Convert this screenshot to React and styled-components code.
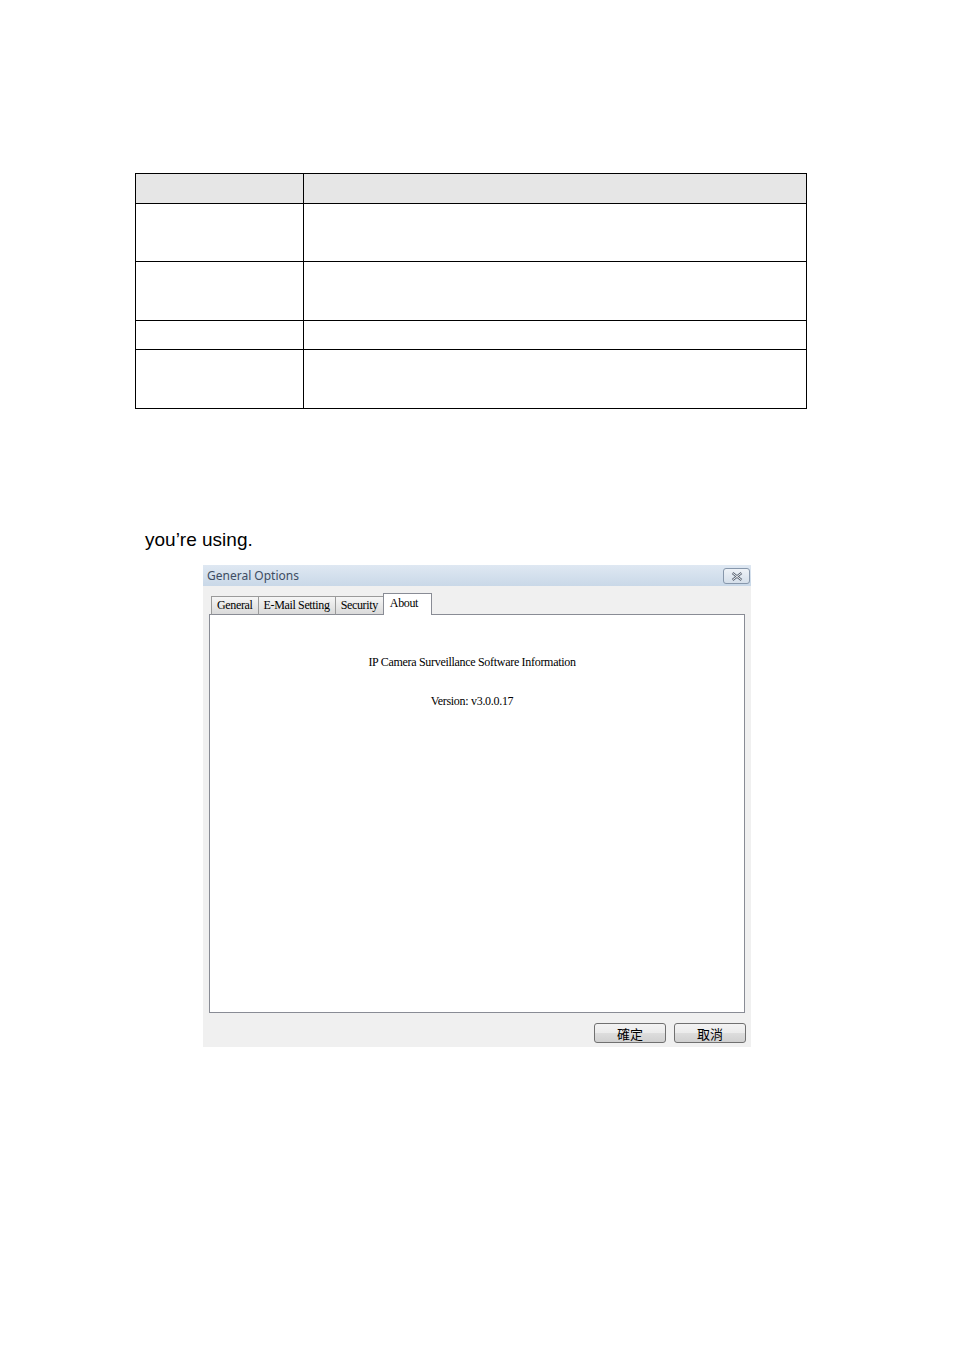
import React from "react";
import styled, { createGlobalStyle } from "styled-components";

const GlobalStyle = createGlobalStyle`
  html, body {
    margin: 0;
    padding: 0;
    background: #ffffff;
  }
  body {
    font-family: "Liberation Sans", Arial, sans-serif;
  }
`;

const Page = styled.div`
  width: 954px;
  height: 1350px;
  box-sizing: border-box;
  padding: 173px 0 0 135px;
`;

const Table = styled.table`
  width: 672px;
  border-collapse: collapse;
  table-layout: fixed;
`;

const Cell = styled.td`
  border: 1.3px solid #000000;
  height: ${(p) => p.h}px;
  padding: 0;
  background: ${(p) => (p.head ? "#e6e6e6" : "#ffffff")};
  box-sizing: border-box;
`;

const Lead = styled.p`
  margin: 120px 0 0 10px;
  font-size: 19px;
  line-height: 22px;
  color: #000000;
`;

const Dialog = styled.div`
  margin: 14px 0 0 68px;
  width: 548px;
  height: 482px;
  background: #f0f0f0;
  display: flex;
  flex-direction: column;
`;

const TitleBar = styled.div`
  height: 21px;
  display: flex;
  align-items: center;
  justify-content: space-between;
  padding: 0 1px 0 4px;
  background: linear-gradient(to bottom, #dfe8f2, #c9d8e8);
`;

const Title = styled.span`
  font-family: "Noto Sans", "Open Sans", sans-serif;
  font-size: 12px;
  color: #3e4d63;
`;

const CloseButton = styled.div`
  width: 25px;
  height: 14px;
  margin-top: 1px;
  border: 1px solid #8797ab;
  border-radius: 3px;
  background: linear-gradient(to bottom, #eef2f7, #d5dfea);
  display: flex;
  align-items: center;
  justify-content: center;
`;

const Body = styled.div`
  flex: 1;
  display: flex;
  flex-direction: column;
  padding: 7px 6px 4px 6px;
`;

const TabRow = styled.div`
  display: flex;
  align-items: flex-end;
  padding-left: 2px;
  height: 22px;
  position: relative;
  z-index: 1;
  margin-bottom: -1px;
`;

const Tab = styled.div`
  height: ${(p) => (p.active ? 22 : 19)}px;
  box-sizing: border-box;
  padding: ${(p) => (p.active ? "2px 13px 0 6px" : "1px 5px 0 5px")};
  margin-left: ${(p) => (p.first ? 0 : -1)}px;
  border: 1px solid ${(p) => (p.active ? "#898c95" : "#9a9a9a")};
  border-bottom: ${(p) => (p.active ? "none" : "1px solid #898c95")};
  background: ${(p) =>
    p.active ? "#ffffff" : "linear-gradient(to bottom, #f6f6f6, #dadada)"};
  font-family: "Liberation Serif", "Times New Roman", serif;
  font-size: 12px;
  letter-spacing: -0.35px;
  color: #000000;
  white-space: nowrap;
`;

const Panel = styled.div`
  height: 399px;
  box-sizing: border-box;
  border: 1px solid #898c95;
  background: #ffffff;
  display: flex;
  flex-direction: column;
  align-items: center;
  padding: 40px 0 0 0;
  font-family: "Liberation Serif", "Times New Roman", serif;
  font-size: 12px;
  letter-spacing: -0.3px;
  color: #000000;
`;

const InfoLine = styled.div`
  line-height: 14px;
  margin-bottom: ${(p) => p.gap || 0}px;
  margin-left: -10px;
`;

const ButtonRow = styled.div`
  display: flex;
  justify-content: flex-end;
  gap: 8px;
  margin-top: 10px;
  margin-right: -1px;
`;

const Button = styled.div`
  width: 72px;
  height: 20px;
  box-sizing: border-box;
  border: 1px solid #707070;
  border-radius: 3px;
  background: linear-gradient(to bottom, #f3f3f3 0%, #ebebeb 50%, #dddddd 51%, #d0d0d0 100%);
  display: flex;
  align-items: center;
  justify-content: center;
  font-family: "Noto Sans CJK TC", "Noto Sans CJK SC", sans-serif;
  font-size: 13px;
  color: #000000;
`;

const rows = [30, 58, 59, 29, 59];

export default function App() {
  return (
    <>
      <GlobalStyle />
      <Page>
        <Table>
          <colgroup>
            <col style={{ width: 168 }} />
            <col />
          </colgroup>
          <tbody>
            {rows.map((h, i) => (
              <tr key={i}>
                <Cell h={h} head={i === 0} />
                <Cell h={h} head={i === 0} />
              </tr>
            ))}
          </tbody>
        </Table>
        <Lead>you’re using.</Lead>
        <Dialog>
          <TitleBar>
            <Title>General Options</Title>
            <CloseButton>
              <svg width="12" height="9" viewBox="0 0 12 9">
                <path
                  d="M1.5 1 L10.5 8 M10.5 1 L1.5 8"
                  stroke="#5a6474"
                  strokeWidth="2.4"
                  fill="none"
                />
                <path
                  d="M1.5 1 L10.5 8 M10.5 1 L1.5 8"
                  stroke="#ffffff"
                  strokeWidth="0.9"
                  fill="none"
                />
              </svg>
            </CloseButton>
          </TitleBar>
          <Body>
            <TabRow>
              <Tab first>General</Tab>
              <Tab>E-Mail Setting</Tab>
              <Tab>Security</Tab>
              <Tab active>About</Tab>
            </TabRow>
            <Panel>
              <InfoLine gap={25}>IP Camera Surveillance Software Information</InfoLine>
              <InfoLine>Version: v3.0.0.17</InfoLine>
            </Panel>
            <ButtonRow>
              <Button>確定</Button>
              <Button>取消</Button>
            </ButtonRow>
          </Body>
        </Dialog>
      </Page>
    </>
  );
}
